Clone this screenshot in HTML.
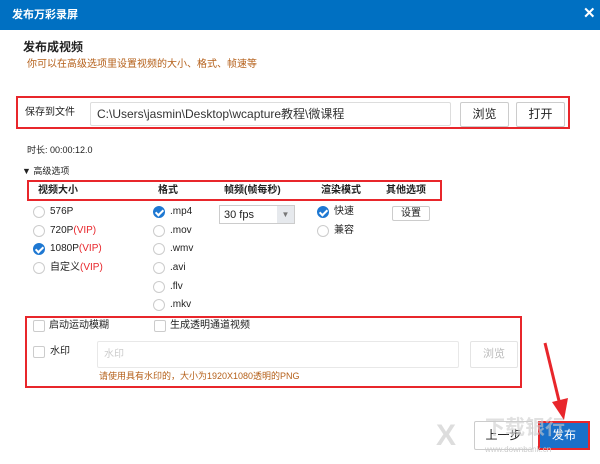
<!DOCTYPE html>
<html><head><meta charset="utf-8"><style>
*{margin:0;padding:0;box-sizing:border-box}
body{width:600px;height:464px;background:#fff;position:relative;overflow:hidden;font-family:"Liberation Sans","Noto Sans CJK SC",sans-serif;font-size:10px;color:#222}
.a{position:absolute;white-space:nowrap;line-height:14px}
.red{border:2px solid #e8262b;position:absolute}
.rad{position:absolute;width:12px;height:12px;border:1px solid #ccc;border-radius:50%;background:#fff}
.rad.on{background:#1e78d2;border-color:#1e78d2}
.rad.on::after{content:"";position:absolute;left:3px;top:1px;width:3px;height:6px;border:solid #fff;border-width:0 2px 2px 0;transform:rotate(45deg)}
.cb{position:absolute;width:12px;height:12px;border:1px solid #ccc;border-radius:2px;background:#fff}
.btn{position:absolute;border:1px solid #ccc;border-radius:2px;background:#fff;text-align:center}
.v{color:#e8262b}
</style></head><body>
<div class="a" style="left:0;top:0;width:600px;height:30px;background:#0070c2"></div>
<div class="a" style="left:12px;top:8px;color:#fff;font-size:11px;font-weight:bold">发布万彩录屏</div>
<div class="a" style="left:583px;top:7px;color:#fff;font-size:15px;font-weight:bold">✕</div>
<div class="a" style="left:23px;top:40px;font-size:12px;font-weight:bold">发布成视频</div>
<div class="a" style="left:27px;top:58px;color:#b5601a;font-size:10px">你可以在高级选项里设置视频的大小、格式、帧速等</div>
<div class="red" style="left:16px;top:96px;width:554px;height:33px"></div>
<div class="a" style="left:25px;top:106px;font-size:10px">保存到文件</div>
<div class="a" style="left:90px;top:102px;width:361px;height:24px;border:1px solid #ddd;border-radius:2px;padding:4px 6px;font-size:12px;color:#333">C:\Users\jasmin\Desktop\wcapture教程\微课程</div>
<div class="btn" style="left:460px;top:102px;width:49px;height:25px;line-height:23px;font-size:12px">浏览</div>
<div class="btn" style="left:516px;top:102px;width:49px;height:25px;line-height:23px;font-size:12px">打开</div>
<div class="a" style="left:27px;top:143px;font-size:9px">时长: 00:00:12.0</div>
<div class="a" style="left:22px;top:164px;font-size:9px">▼ 高级选项</div>
<div class="red" style="left:27px;top:180px;width:415px;height:21px"></div>
<div class="a" style="left:38px;top:184px;font-weight:bold">视频大小</div>
<div class="a" style="left:158px;top:184px;font-weight:bold">格式</div>
<div class="a" style="left:224px;top:184px;font-weight:bold">帧频(帧每秒)</div>
<div class="a" style="left:321px;top:184px;font-weight:bold">渲染模式</div>
<div class="a" style="left:386px;top:184px;font-weight:bold">其他选项</div>
<div class="rad" style="left:33px;top:206px"></div><div class="a" style="left:50px;top:205px">576P</div>
<div class="rad" style="left:33px;top:225px"></div><div class="a" style="left:50px;top:224px">720P<span class="v">(VIP)</span></div>
<div class="rad on" style="left:33px;top:243px"></div><div class="a" style="left:50px;top:242px">1080P<span class="v">(VIP)</span></div>
<div class="rad" style="left:33px;top:262px"></div><div class="a" style="left:50px;top:261px">自定义<span class="v">(VIP)</span></div>
<div class="rad on" style="left:153px;top:206px"></div><div class="a" style="left:170px;top:205px">.mp4</div>
<div class="rad" style="left:153px;top:225px"></div><div class="a" style="left:170px;top:224px">.mov</div>
<div class="rad" style="left:153px;top:243px"></div><div class="a" style="left:170px;top:242px">.wmv</div>
<div class="rad" style="left:153px;top:262px"></div><div class="a" style="left:170px;top:261px">.avi</div>
<div class="rad" style="left:153px;top:281px"></div><div class="a" style="left:170px;top:280px">.flv</div>
<div class="rad" style="left:153px;top:299px"></div><div class="a" style="left:170px;top:298px">.mkv</div>
<div class="a" style="left:219px;top:205px;width:76px;height:19px;border:1px solid #ccc;background:#fff"></div>
<div class="a" style="left:277px;top:206px;width:17px;height:17px;background:#e6e9ed;color:#777;font-size:8px;text-align:center;line-height:17px">▼</div>
<div class="a" style="left:224px;top:208px;font-size:11px">30 fps</div>
<div class="rad on" style="left:317px;top:206px"></div><div class="a" style="left:334px;top:205px">快速</div>
<div class="rad" style="left:317px;top:225px"></div><div class="a" style="left:334px;top:224px">兼容</div>
<div class="btn" style="left:392px;top:206px;width:38px;height:15px;line-height:13px;font-size:10px">设置</div>
<div class="red" style="left:25px;top:316px;width:497px;height:72px"></div>
<div class="cb" style="left:33px;top:320px"></div><div class="a" style="left:49px;top:319px">启动运动模糊</div>
<div class="cb" style="left:154px;top:320px"></div><div class="a" style="left:170px;top:319px">生成透明通道视频</div>
<div class="cb" style="left:33px;top:346px"></div><div class="a" style="left:50px;top:345px">水印</div>
<div class="a" style="left:97px;top:341px;width:362px;height:27px;border:1px solid #e8e8e8;border-radius:2px;padding:6px;color:#ccc">水印</div>
<div class="btn" style="left:470px;top:341px;width:48px;height:27px;line-height:25px;color:#bbb;border-color:#e4e4e4;font-size:11px">浏览</div>
<div class="a" style="left:99px;top:369px;color:#b5601a;font-size:9px">请使用具有水印的，大小为1920X1080透明的PNG</div>
<div class="a" style="left:436px;top:418px;color:#ddd;font-size:30px;font-weight:bold;line-height:36px">X</div>
<div class="btn" style="left:474px;top:421px;width:59px;height:29px;line-height:27px;font-size:12px">上一步</div>
<div class="a" style="left:538px;top:421px;width:52px;height:29px;background:#1a70c9;border:2px solid #e8262b;color:#fff;text-align:center;line-height:25px;font-size:12px">发布</div>
<div class="a" style="left:485px;top:416px;color:#ccc;font-size:20px;font-weight:bold;opacity:.6;line-height:24px">下载银行</div>
<div class="a" style="left:485px;top:443px;color:#ccc;font-size:8px">www.downbank.cn</div>
<svg class="a" style="left:540px;top:340px" width="40" height="85"><path d="M5 3 L20 65" stroke="#e8262b" stroke-width="3"/><path d="M12 62 L24 80 L28 58 Z" fill="#e8262b"/></svg>
</body></html>
